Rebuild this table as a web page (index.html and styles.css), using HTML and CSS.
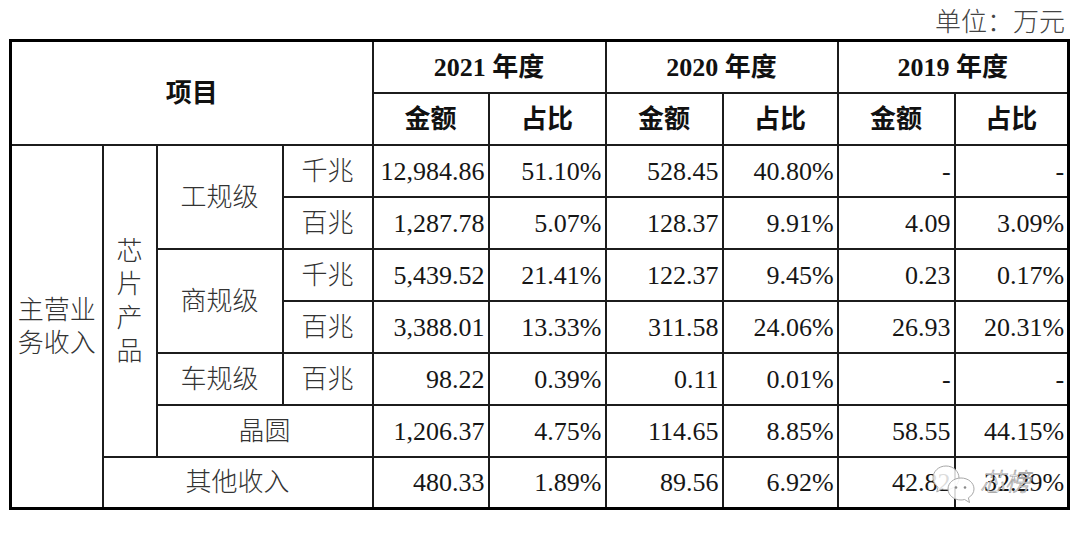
FILE: index.html
```html
<!DOCTYPE html>
<html lang="zh-CN">
<head>
<meta charset="utf-8">
<title>营业收入构成</title>
<link rel="stylesheet" href="styles.css">
</head>
<body>
<div class="page">
  <div class="unit">单位：万元</div>
  <table class="report">
    <colgroup>
      <col class="c1"><col class="c2"><col class="c3"><col class="c4">
      <col class="c5"><col class="c6"><col class="c7"><col class="c8"><col class="c9"><col class="c10">
    </colgroup>
    <thead>
      <tr>
        <th colspan="4" rowspan="2">项目</th>
        <th colspan="2">2021 年度</th>
        <th colspan="2">2020 年度</th>
        <th colspan="2">2019 年度</th>
      </tr>
      <tr>
        <th>金额</th><th>占比</th>
        <th>金额</th><th>占比</th>
        <th>金额</th><th>占比</th>
      </tr>
    </thead>
    <tbody>
      <tr>
        <td rowspan="7" class="lbl multi">主营业<br>务收入</td>
        <td rowspan="6" class="lbl multi">芯<br>片<br>产<br>品</td>
        <td rowspan="2" class="lbl">工规级</td>
        <td class="lbl">千兆</td>
        <td class="num">12,984.86</td><td class="num">51.10%</td>
        <td class="num">528.45</td><td class="num">40.80%</td>
        <td class="num">-</td><td class="num">-</td>
      </tr>
      <tr>
        <td class="lbl">百兆</td>
        <td class="num">1,287.78</td><td class="num">5.07%</td>
        <td class="num">128.37</td><td class="num">9.91%</td>
        <td class="num">4.09</td><td class="num">3.09%</td>
      </tr>
      <tr>
        <td rowspan="2" class="lbl">商规级</td>
        <td class="lbl">千兆</td>
        <td class="num">5,439.52</td><td class="num">21.41%</td>
        <td class="num">122.37</td><td class="num">9.45%</td>
        <td class="num">0.23</td><td class="num">0.17%</td>
      </tr>
      <tr>
        <td class="lbl">百兆</td>
        <td class="num">3,388.01</td><td class="num">13.33%</td>
        <td class="num">311.58</td><td class="num">24.06%</td>
        <td class="num">26.93</td><td class="num">20.31%</td>
      </tr>
      <tr>
        <td class="lbl">车规级</td>
        <td class="lbl">百兆</td>
        <td class="num">98.22</td><td class="num">0.39%</td>
        <td class="num">0.11</td><td class="num">0.01%</td>
        <td class="num">-</td><td class="num">-</td>
      </tr>
      <tr>
        <td colspan="2" class="lbl">晶圆</td>
        <td class="num">1,206.37</td><td class="num">4.75%</td>
        <td class="num">114.65</td><td class="num">8.85%</td>
        <td class="num">58.55</td><td class="num">44.15%</td>
      </tr>
      <tr>
        <td colspan="3" class="lbl">其他收入</td>
        <td class="num">480.33</td><td class="num">1.89%</td>
        <td class="num">89.56</td><td class="num">6.92%</td>
        <td class="num">42.82</td><td class="num">32.29%</td>
      </tr>
    </tbody>
  </table>

  <div class="watermark">
    <svg class="wm-logo" width="44" height="42" viewBox="0 0 44 42">
      <path class="bubble" d="M14 2 C6.5 2 1 7.5 1 14 C1 17.8 3 21 6 23.2 L4.8 28 L10 25 C11.3 25.4 12.6 25.6 14 25.6 C21.5 25.6 27 20.4 27 14 C27 7.5 21.5 2 14 2 Z"/>
      <path class="bubble" d="M29 14 C21.8 14 16 18.8 16 25 C16 31.2 21.8 36 29 36 C30.3 36 31.5 35.8 32.6 35.5 L37.5 38.5 L36.4 33.8 C39.8 31.8 42 28.6 42 25 C42 18.8 36.2 14 29 14 Z"/>
      <circle class="dot" cx="24" cy="23.5" r="1.3"/>
      <circle class="dot" cx="33" cy="23.5" r="1.3"/>
    </svg>
    <span class="wm-text">芯榜</span>
  </div>
</div>
</body>
</html>
```

FILE: styles.css
```css
html, body {
  margin: 0;
  padding: 0;
  background: #ffffff;
}

.page {
  position: relative;
  width: 1080px;
  height: 533px;
  font-family: "Liberation Serif", "Noto Sans CJK SC", serif;
  font-size: 26px;
  color: #111;
}

.unit {
  height: 29px;
  padding-top: 10px;
  line-height: 26px;
  text-align: right;
  padding-right: 15px;
  color: #444;
  font-weight: 300;
}

.report {
  margin-left: 9px;
  width: 1061px;
  table-layout: fixed;
  border-collapse: collapse;
  border: 3px solid #000;
}

.c1 { width: 92px; }
.c2 { width: 54px; }
.c3 { width: 126px; }
.c4 { width: 90px; }
.c5 { width: 116px; }
.c6 { width: 117px; }
.c7 { width: 117px; }
.c8 { width: 115px; }
.c9 { width: 117px; }
.c10 { width: 114px; }

.report tr {
  height: 52px;
}

.report th,
.report td {
  border: 2px solid #1c1c1c;
  padding: 2px 3px 0 0;
  line-height: 30px;
  white-space: nowrap;
}

.report th {
  font-weight: 700;
  text-align: center;
  padding: 3px 0 0 0;
  color: #111;
}

.report .lbl {
  text-align: center;
  padding: 2px 0 0 0;
  color: #333;
  font-weight: 300;
}

.report .multi {
  line-height: 33.5px;
}

.report .num {
  text-align: right;
  color: #161616;
}

.watermark {
  position: absolute;
  left: 932px;
  top: 464px;
  display: flex;
  align-items: flex-start;
  gap: 4px;
}

.wm-logo .bubble {
  fill: rgba(255, 255, 255, 0.85);
  stroke: #a8a8a8;
  stroke-width: 1;
}

.wm-logo .dot {
  fill: #8a8a8a;
}

.wm-text {
  margin-top: 1px;
  font-family: "Noto Sans CJK SC", sans-serif;
  font-weight: 300;
  font-size: 25px;
  line-height: 30px;
  font-style: italic;
  color: rgba(255, 255, 255, 0.75);
  -webkit-text-stroke: 0.6px #9a9a9a;
}
```
